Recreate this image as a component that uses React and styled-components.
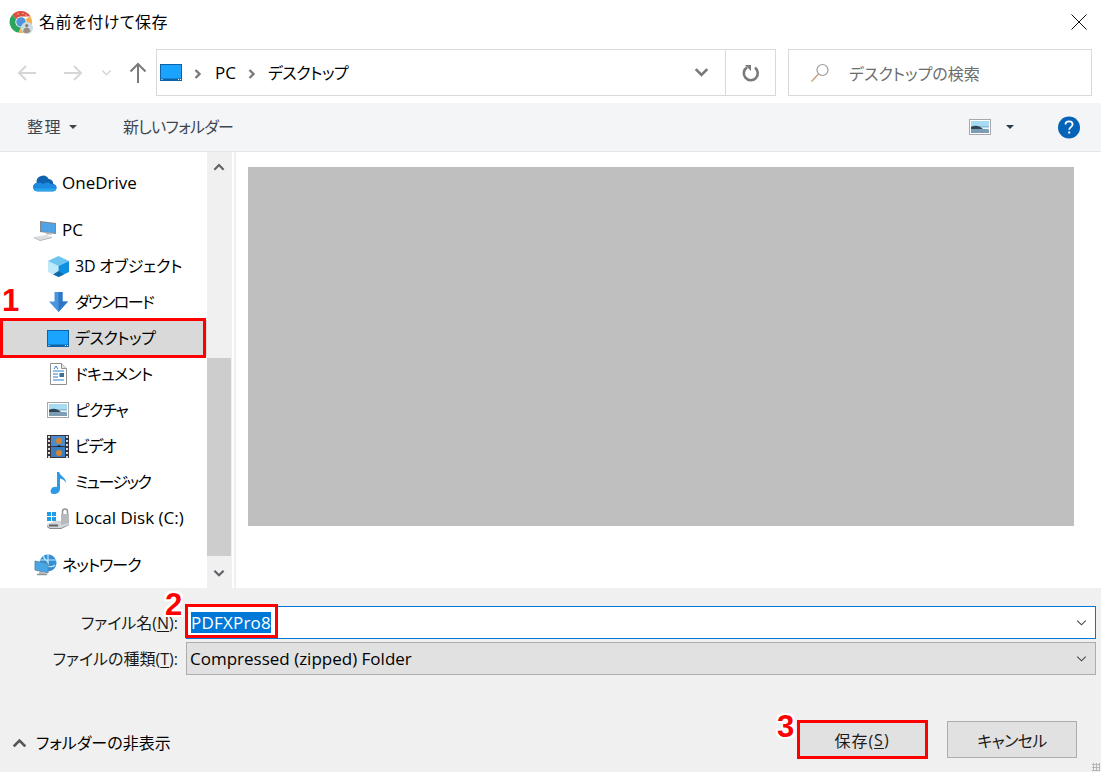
import React from 'react'
import styled, { createGlobalStyle } from 'styled-components'

const Global = createGlobalStyle`
  html, body { margin: 0; padding: 0; background: #fff; }
  * { box-sizing: border-box; }
  body {
    font-family: "Open Sans", "Noto Sans CJK JP", sans-serif;
    font-feature-settings: "palt";
    font-size: 16px;
    color: #000;
  }
`

const Dialog = styled.div`
  width: 1101px;
  height: 772px;
  position: relative;
  overflow: hidden;
  display: flex;
  flex-direction: column;
  background: #fff;
`

const TitleBar = styled.div`
  height: 49px;
  display: flex;
  align-items: center;
  padding: 0 14px 5px 9px;
  gap: 6px;
  flex: none;
`

const TitleText = styled.div`
  flex: 1;
  line-height: 20px;
  letter-spacing: 0.5px;
`

const NavRow = styled.div`
  height: 54px;
  display: flex;
  align-items: flex-start;
  padding-right: 9px;
  flex: none;
`

const NavButtons = styled.div`
  width: 156px;
  height: 47px;
  display: flex;
  align-items: center;
  padding-left: 17px;
  flex: none;
`

const NavGap = styled.span`
  width: ${p => p.$w}px;
  flex: none;
`

const AddressBox = styled.div`
  width: 620px;
  height: 47px;
  border: 1px solid #d9d9d9;
  display: flex;
  align-items: center;
  padding-left: 3px;
  flex: none;
`

const Crumb = styled.span`
  line-height: 20px;
  margin: 0 ${p => p.$gap || 0}px;
  font-size: ${p => (p.$latin ? 17 : 16)}px;
  letter-spacing: ${p => p.$ls || 0}px;
`

const Spacer = styled.div`
  flex: 1;
`

const RefreshCell = styled.div`
  width: 50px;
  height: 100%;
  border-left: 1px solid #d9d9d9;
  display: flex;
  align-items: center;
  justify-content: center;
`

const SearchBox = styled.div`
  width: 304px;
  height: 47px;
  margin-left: 12px;
  border: 1px solid #d9d9d9;
  display: flex;
  align-items: center;
  padding-left: 21px;
  gap: 19px;
  color: #6d6d6d;
`

const Toolbar = styled.div`
  height: 49px;
  background: #f4f5f7;
  border-bottom: 1px solid #e6e6e6;
  display: flex;
  align-items: center;
  padding: 0 21px 0 27px;
  color: #3f4650;
  flex: none;
`

const ToolLabel = styled.span`
  line-height: 20px;
  letter-spacing: ${p => p.$ls || 0}px;
`

const Caret = styled.span`
  width: 0;
  height: 0;
  border-left: 4px solid transparent;
  border-right: 4px solid transparent;
  border-top: 4px solid ${p => p.$color || '#444'};
  margin: ${p => p.$margin || '0'};
`

const Main = styled.div`
  height: 436px;
  display: flex;
  flex: none;
`

const Sidebar = styled.nav`
  width: 207px;
  padding-top: 13px;
  flex: none;
`

const Row = styled.div`
  height: 36px;
  display: flex;
  align-items: center;
  position: relative;
  padding-left: ${p => p.$indent}px;
  gap: 5px;
  margin-bottom: ${p => p.$mb || 0}px;
  background: ${p => (p.$selected ? '#d9d9d9' : 'transparent')};
`

const RowLabel = styled.span`
  font-size: ${p => (p.$latin ? 17 : 16)}px;
  letter-spacing: ${p => p.$ls || 0}px;
  line-height: ${p => (p.$latin ? 22 : 23)}px;
`

const IconSlot = styled.span`
  width: 24px;
  height: 24px;
  display: flex;
  align-items: center;
  justify-content: center;
  flex: none;
`

const RedBox = styled.div`
  position: absolute;
  border: 3px solid #f00;
  pointer-events: none;
`

const SideRed = styled(RedBox)`
  left: 0;
  top: -2px;
  width: 206px;
  height: 40px;
`

const Scrollbar = styled.div`
  width: 25px;
  background: #f0f0f0;
  display: flex;
  flex-direction: column;
  flex: none;
`

const ScrollArrow = styled.div`
  width: 24px;
  height: 30px;
  display: flex;
  align-items: center;
  justify-content: center;
  flex: none;
`

const ScrollThumb = styled.div`
  width: 24px;
  height: 198px;
  margin-top: 176px;
  background: #cdcdcd;
  flex: none;
`

const Preview = styled.div`
  flex: 1;
  margin-left: 2px;
  border-left: 2px solid #f0f0f0;
  padding: 15px 27px 62px 12px;
`

const PreviewInner = styled.div`
  height: 100%;
  background: #bfbfbf;
`

const Footer = styled.div`
  flex: 1;
  background: #f0f0f0;
  display: flex;
  flex-direction: column;
  padding: 18px 5px 0 0;
  position: relative;
`

const FormRow = styled.div`
  display: flex;
  align-items: center;
  margin-bottom: 3px;
`

const FieldLabel = styled.label`
  width: 178px;
  text-align: right;
  line-height: 20px;
  flex: none;
  margin-right: 8px;
  color: #1a1a1a;
`

const Key = styled.span`
  text-decoration: underline;
  text-underline-offset: 2px;
  text-decoration-thickness: 1px;
`

const Field = styled.div`
  flex: 1;
  height: 33px;
  display: flex;
  align-items: center;
  position: relative;
  border: 1px solid ${p => (p.$active ? '#0078d7' : '#adadad')};
  background: ${p => (p.$active ? '#fff' : '#e1e1e1')};
  padding-left: ${p => (p.$active ? 4 : 3)}px;
  padding-right: 8px;
  font-size: 17px;
`

const Selected = styled.span`
  background: #0078d7;
  color: #fff;
  line-height: 21px;
  height: 21px;
  letter-spacing: 0.2px;
`

const FieldValue = styled.span`
  line-height: 20px;
  flex: 1;
`

const FileRed = styled(RedBox)`
  left: -2px;
  top: -3px;
  width: 93px;
  height: 34px;
`

const BottomRow = styled.div`
  margin-top: 43px;
  display: flex;
  align-items: center;
  height: 37px;
  padding: 0 19px 0 12px;
`

const HideFolders = styled.div`
  display: flex;
  align-items: center;
  gap: 9px;
  flex: 1;
  line-height: 20px;
  margin-top: 7px;
`

const Button = styled.div`
  width: 130px;
  height: 37px;
  background: #e1e1e1;
  border: 1px solid #adadad;
  display: flex;
  align-items: center;
  justify-content: center;
  position: relative;
  margin-left: ${p => p.$ml || 0}px;
  color: #1a1a1a;
  letter-spacing: ${p => p.$ls || 0}px;
`

const ButtonRed = styled(RedBox)`
  left: -1px;
  top: -2px;
  width: 131px;
  height: 39px;
`

const Step = styled.div`
  position: absolute;
  left: ${p => p.$x}px;
  top: ${p => p.$y}px;
  font-family: "Liberation Sans", sans-serif;
  font-weight: 700;
  font-size: 31px;
  line-height: 32px;
  color: #f00;
  text-shadow: 2px 0 #fff, -2px 0 #fff, 0 2px #fff, 0 -2px #fff, 2px 2px #fff, -2px 2px #fff, 2px -2px #fff, -2px -2px #fff;
`

const Grip = styled.div`
  position: absolute;
  right: 1px;
  bottom: 1px;
  width: 8px;
  height: 8px;
  background-image: radial-gradient(#b5b5b5 1px, transparent 1.2px);
  background-size: 3px 3px;
`

const ChevronUp = ({ size = 14, color = '#5f6368' }) => (
  <svg width={size} height={size * 0.7} viewBox="0 0 14 10">
    <path d="M1.5 8 7 2.5 12.500 8" fill="none" stroke={color} strokeWidth="2.6" />
  </svg>
)

const ChevronDown = ({ size = 14, color = '#5f6368', w = 2.6 }) => (
  <svg width={size} height={size * 0.7} viewBox="0 0 14 10">
    <path d="M1.5 2 7 7.5 12.500 2" fill="none" stroke={color} strokeWidth={w} />
  </svg>
)

const BackArrow = ({ color = '#d6d6d6', flip }) => (
  <svg width="20" height="16" viewBox="0 0 20 16" style={flip ? { transform: 'scaleX(-1)' } : undefined}>
    <path d="M19 8H2M9 1 2 8l7 7" fill="none" stroke={color} strokeWidth="2" />
  </svg>
)

const UpArrow = () => (
  <svg width="18" height="21" viewBox="0 0 18 21">
    <path d="M9 21V2M1.5 9.500 9 2l7.500 7.500" fill="none" stroke="#7a7a7a" strokeWidth="2" />
  </svg>
)

const CrumbSep = () => (
  <svg width="8" height="10" viewBox="0 0 8 10">
    <path d="M1.500 1 5.500 5l-4 4" fill="none" stroke="#7a7a7a" strokeWidth="2.400" />
  </svg>
)

const RefreshIcon = () => (
  <svg width="18" height="18" viewBox="0 0 18 18">
    <path d="M13 3.600A7 7 0 1 1 5 3.300" fill="none" stroke="#7a7a7a" strokeWidth="2.600" />
    <path d="M3 1h6v6z" fill="#7a7a7a" />
  </svg>
)

const SearchIcon = () => (
  <svg width="20" height="20" viewBox="0 0 20 20">
    <circle cx="12.500" cy="7" r="5.500" fill="none" stroke="#9a9a9a" strokeWidth="1.200" />
    <path d="M8.500 11 1.500 18.500" stroke="#c2a27c" strokeWidth="1.400" />
  </svg>
)

const ChromeLogo = () => (
  <svg width="24" height="24" viewBox="0 0 24 24">
    <path d="M12 1a11 11 0 0 1 9.500 5.500H12a5.500 5.500 0 0 0-5 3L3.500 4.500A11 11 0 0 1 12 1z" fill="#dc5040" />
    <path d="M3.500 4.500 7 9.500a5.500 5.500 0 0 0 5 8l-2.600 5.200A11 11 0 0 1 3.500 4.500z" fill="#2ba55b" />
    <path d="M21.500 6.500a11 11 0 0 1-12 16.200L12 17.500a5.500 5.500 0 0 0 4.600-8.500z" fill="#f0b050" />
    <circle cx="9" cy="4" r=".8" fill="#f3b5a5" />
    <circle cx="14" cy="3.500" r=".8" fill="#f3b5a5" />
    <circle cx="17" cy="5" r=".8" fill="#f3b5a5" />
    <circle cx="12" cy="12" r="4.800" fill="#4e95dc" />
    <circle cx="18" cy="18" r="6" fill="#c9dde6" />
    <path d="M14 22c.5-3 1.500-4.500 3.500-4.500s3.500 1.500 4 4a6 6 0 0 1-7.500.5z" fill="#9c8f80" />
    <circle cx="17.800" cy="15.500" r="1.600" fill="#8a7a6a" />
  </svg>
)

const DesktopIcon = () => (
  <svg width="22" height="17" viewBox="0 0 22 17">
    <rect x=".5" y=".5" width="21" height="16" fill="#1aa3ff" stroke="#0d63a8" />
    <rect x="1" y="14.500" width="20" height="2" fill="#0d63a8" />
    <rect x="1.500" y="15" width="1" height="1" fill="#fff" />
    <rect x="18" y="15" width="1" height="1" fill="#fff" />
    <rect x="20" y="15" width="1" height="1" fill="#fff" />
  </svg>
)

const OneDriveIcon = () => (
  <svg width="26" height="18" viewBox="0 0 26 18">
    <path d="M4.500 18a4.500 4.500 0 0 1-.6-8.900A7 7 0 0 1 17 4.800a5.500 5.500 0 0 1 5 5.300 4 4 0 0 1 0 7.900z" fill="#0f62b0" />
    <path d="M4.500 18a4.500 4.500 0 0 1-1-8.800c3-1 5.500-.5 7.500 1 2-2 6-2.500 8 0 2 0 4 .4 5.500 1.500A3.900 3.900 0 0 1 22 18z" fill="#1b8ae0" />
    <path d="M4.500 18A4.500 4.500 0 0 1 .8 15h24.400A3.900 3.900 0 0 1 22 18z" fill="#2aa5ec" />
  </svg>
)

const PcIcon = () => (
  <svg width="24" height="21" viewBox="0 0 24 21">
    <path d="M7 1l16 2v11L7 12z" fill="#7f8790" />
    <path d="M8 2.200l14 1.700v9L8 11.200z" fill="#4da3e6" />
    <path d="M13 12.500h5l1 2h-6z" fill="#b5babf" />
    <path d="M1 17l12-2 6 2-12 3z" fill="#dcdedf" />
    <path d="M1 17v1l6 3 12-3v-1l-12 3z" fill="#aeb1b4" />
  </svg>
)

const CubeIcon = () => (
  <svg width="23" height="23" viewBox="0 0 23 23">
    <path d="M1 6l10.500 5v11L1 17z" fill="#bfe9f8" />
    <path d="M11.500 1 22 6l-10.500 5L1 6z" fill="#6cc4ef" />
    <path d="M11.500 11 22 6v11l-10.500 5z" fill="#0f8fe0" />
    <path d="M11.500 16 17 19.500l-5.500 2.500L6 19.500z" fill="#0e6aa8" />
  </svg>
)

const DownloadIcon = () => (
  <svg width="19" height="20" viewBox="0 0 19 20">
    <path d="M5.500 0h8v9.500H19L9.500 20 0 9.500h5.500z" fill="#4a96de" />
    <path d="M9.500 0h4v9.500H19L9.500 20z" fill="#2f77c4" />
  </svg>
)

const DocIcon = () => (
  <svg width="17" height="22" viewBox="0 0 17 22">
    <path d="M.5.500h11l5 5v16H.5z" fill="#fff" stroke="#8f8f8f" />
    <path d="M11.500.500v5h5" fill="#e6e6e6" stroke="#8f8f8f" />
    <path d="M3 8h11M3 11h5M3 14h5M3 17h11" stroke="#2d7fd0" />
    <path d="M4 6l2-3 2 3" stroke="#2d7fd0" fill="none" />
    <rect x="9.500" y="10" width="4.500" height="4" fill="#3f6f95" />
  </svg>
)

const PictureIcon = () => (
  <svg width="22" height="16" viewBox="0 0 22 16">
    <rect x=".5" y=".5" width="21" height="15" fill="#fff" stroke="#a8a8a8" />
    <rect x="2" y="2" width="18" height="5" fill="#a6dbf2" />
    <rect x="2" y="7" width="18" height="7" fill="#8fbcd4" />
    <path d="M2 8c3-1.500 6-1.500 8-.5l5 2.500H2z" fill="#2f4657" />
    <path d="M2 10h14l4 1v3H2z" fill="#7c9db3" />
    <path d="M12 8.500h8v1.500h-6z" fill="#e3f3fa" />
  </svg>
)

const VideoIcon = () => (
  <svg width="22" height="23" viewBox="0 0 22 23">
    <rect width="22" height="23" fill="#3c3436" />
    <path d="M1 2h2M1 6h2M1 10h2M1 14h2M1 18h2M1 22h2M19 2h2M19 6h2M19 10h2M19 14h2M19 18h2M19 22h2" stroke="#ddd" strokeWidth="2" />
    <rect x="4" y="1" width="14" height="10" fill="#4a8ccf" />
    <rect x="4" y="12" width="14" height="10" fill="#3a7cc0" />
    <circle cx="12" cy="6" r="3" fill="#d8842a" />
    <circle cx="12" cy="18" r="3" fill="#d8842a" />
    <path d="M12 10l-3 2h6z" fill="#201c1c" />
  </svg>
)

const MusicIcon = () => (
  <svg width="17" height="23" viewBox="0 0 17 23">
    <path d="M7 1h2.200c.5 4 6.800 5 6.800 11-1.500-3-4-4-6-4.500V18c0 3-3 5-6 5S0 21 1 18.500 5 15.500 7 16z" fill="#2b9be8" />
  </svg>
)

const DiskIcon = () => (
  <svg width="24" height="23" viewBox="0 0 24 23">
    <path d="M1 17l8-3h14v4l-8 4H4l-3-2z" fill="#d3d6d9" />
    <path d="M1 19l3 2h11l8-3.500V18l-8 4H4l-3-2z" fill="#85898d" />
    <rect x="3" y="17.500" width="9" height="2" fill="#5f6367" />
    <path d="M15 7h8v9l-8 2z" fill="#b7babd" />
    <path d="M16.500 7V4.500a2.500 2.500 0 0 1 5 0V7" fill="none" stroke="#8f9498" strokeWidth="1.500" />
    <rect x="1" y="5" width="4" height="4" fill="#1f9be8" />
    <rect x="6" y="5" width="4" height="4" fill="#1f9be8" />
    <rect x="1" y="10" width="4" height="4" fill="#1f9be8" />
    <rect x="6" y="10" width="4" height="4" fill="#1f9be8" />
  </svg>
)

const NetworkIcon = () => (
  <svg width="23" height="23" viewBox="0 0 23 23">
    <circle cx="14" cy="9" r="8.500" fill="#2f90d8" />
    <path d="M10 2c-2 4 6 4 4 8s5 3 7 1M14 .5v10M6 6h16" fill="none" stroke="#c5e8f7" strokeWidth="1.200" />
    <path d="M1 7l13 3v9L1 16z" fill="#46a6e6" stroke="#6a8aa3" />
    <path d="M5 18h6l1 3H5z" fill="#b8bec3" />
    <path d="M3 20.500h10" stroke="#8e9499" strokeWidth="1.500" />
  </svg>
)

const CloseIcon = () => (
  <svg width="16" height="16" viewBox="0 0 16 16">
    <path d="M.5.500l15 15M15.500.500l-15 15" stroke="#111" strokeWidth="1" />
  </svg>
)

const HelpIcon = () => (
  <svg width="22" height="23" viewBox="0 0 22 23">
    <circle cx="11" cy="11.500" r="11" fill="#0563b8" />
    <path d="M7.500 8.500c0-2 1.500-3.200 3.600-3.200s3.500 1.200 3.500 3c0 2.800-3.400 2.800-3.400 5.500" fill="none" stroke="#fff" strokeWidth="1.800" />
    <rect x="10.200" y="15.500" width="2" height="2" fill="#fff" />
  </svg>
)

const places = [
  { label: '3D オブジェクト', icon: <CubeIcon />, ls: -0.2 },
  { label: 'ダウンロード', icon: <DownloadIcon />, ls: -1.5 },
  { label: 'デスクトップ', icon: <DesktopIcon />, ls: -0.5, selected: true },
  { label: 'ドキュメント', icon: <DocIcon />, ls: -0.7 },
  { label: 'ピクチャ', icon: <PictureIcon />, ls: -1 },
  { label: 'ビデオ', icon: <VideoIcon />, ls: -1.3 },
  { label: 'ミュージック', icon: <MusicIcon />, ls: -1.6 },
  { label: 'Local Disk (C:)', icon: <DiskIcon />, latin: true },
]

export default function App() {
  return (
    <Dialog>
      <Global />
      <TitleBar>
        <ChromeLogo />
        <TitleText>名前を付けて保存</TitleText>
        <CloseIcon />
      </TitleBar>

      <NavRow>
        <NavButtons>
          <BackArrow />
          <NavGap $w={26} />
          <BackArrow flip />
          <NavGap $w={18} />
          <ChevronDown size={11} color="#d6d6d6" w={2} />
          <NavGap $w={17} />
          <UpArrow />
        </NavButtons>
        <AddressBox>
          <DesktopIcon />
          <Crumb $gap={12}><CrumbSep /></Crumb>
          <Crumb $gap={1} $latin>PC</Crumb>
          <Crumb $gap={11.5}><CrumbSep /></Crumb>
          <Crumb $ls={-0.5}>デスクトップ</Crumb>
          <Spacer />
          <ChevronDown size={15} color="#7a7a7a" />
          <NavGap $w={16} />
          <RefreshCell><RefreshIcon /></RefreshCell>
        </AddressBox>
        <SearchBox>
          <SearchIcon />
          デスクトップの検索
        </SearchBox>
      </NavRow>

      <Toolbar>
        <ToolLabel $ls={1.5}>整理</ToolLabel>
        <Caret $margin="0 46px 0 7px" />
        <ToolLabel $ls={-0.7}>新しいフォルダー</ToolLabel>
        <Spacer />
        <PictureIcon />
        <Caret $color="#2b3a4d" $margin="0 44px 0 15px" />
        <HelpIcon />
      </Toolbar>

      <Main>
        <Sidebar>
          <Row $indent={33} $mb={11}>
            <IconSlot><OneDriveIcon /></IconSlot>
            <RowLabel $latin>OneDrive</RowLabel>
          </Row>
          <Row $indent={33}>
            <IconSlot><PcIcon /></IconSlot>
            <RowLabel $latin>PC</RowLabel>
          </Row>
          {places.map((place, i) => (
            <Row key={place.label} $indent={46} $selected={place.selected} $mb={i === places.length - 1 ? 11 : 0}>
              <IconSlot>{place.icon}</IconSlot>
              <RowLabel $latin={place.latin} $ls={place.ls}>{place.label}</RowLabel>
              {place.selected && <SideRed />}
            </Row>
          ))}
          <Row $indent={33}>
            <IconSlot><NetworkIcon /></IconSlot>
            <RowLabel $ls={-1}>ネットワーク</RowLabel>
          </Row>
        </Sidebar>
        <Scrollbar>
          <ScrollArrow><ChevronUp size={12} /></ScrollArrow>
          <ScrollThumb />
          <Spacer />
          <ScrollArrow><ChevronDown size={12} /></ScrollArrow>
        </Scrollbar>
        <Preview>
          <PreviewInner />
        </Preview>
      </Main>

      <Footer>
        <FormRow>
          <FieldLabel>ファイル名(<Key>N</Key>):</FieldLabel>
          <Field $active>
            <Selected>PDFXPro8</Selected>
            <FileRed />
            <Spacer />
            <ChevronDown size={11} color="#444" w={1.4} />
          </Field>
        </FormRow>
        <FormRow>
          <FieldLabel>ファイルの種類(<Key>T</Key>):</FieldLabel>
          <Field>
            <FieldValue>Compressed (zipped) Folder</FieldValue>
            <ChevronDown size={11} color="#444" w={1.4} />
          </Field>
        </FormRow>
        <BottomRow>
          <HideFolders>
            <ChevronUp size={15} color="#555" />
            フォルダーの非表示
          </HideFolders>
          <Button $ls={1}>
            保存(<Key>S</Key>)
            <ButtonRed />
          </Button>
          <Button $ml={20} $ls={-0.6}>キャンセル</Button>
        </BottomRow>
        <Grip />
      </Footer>

      <Step $x={2} $y={285}>1</Step>
      <Step $x={165} $y={589}>2</Step>
      <Step $x={777} $y={711}>3</Step>
    </Dialog>
  )
}
